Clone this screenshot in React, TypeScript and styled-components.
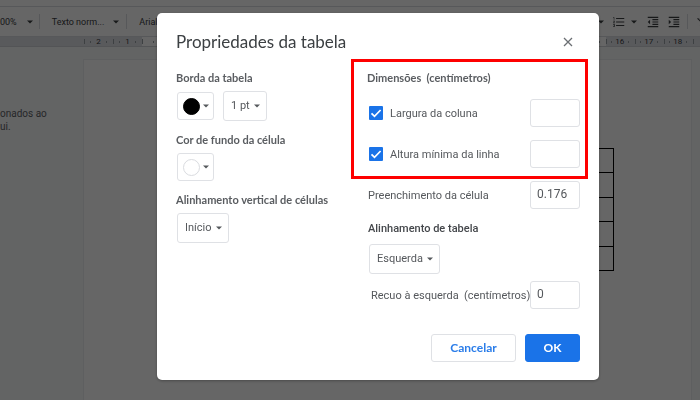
import React from "react";
import styled, { createGlobalStyle } from "styled-components";
import {
  MdFormatClear,
  MdFormatIndentDecrease,
  MdFormatIndentIncrease,
  MdFormatListNumbered,
} from "react-icons/md";

const GlobalStyle = createGlobalStyle`
  * { box-sizing: border-box; }
  html, body, #root { height: 100%; margin: 0; }
  body {
    overflow: hidden;
    font-family: Roboto, "Liberation Sans", sans-serif;
    font-size: 11px;
    color: #55585c;
  }
  button, input, select { font: inherit; color: inherit; margin: 0; }
`;

const rounded = `"Lato", "Open Sans", sans-serif`;

/* Document editor */

const Editor = styled.div`
  display: flex;
  flex-direction: column;
  height: 100%;
  background: #f8f9fa;
`;

const MenuStrip = styled.div`
  flex: none;
  height: 7px;
  background: #fff;
  border-bottom: 1px solid #dadce0;
`;

const Toolbar = styled.div`
  flex: none;
  display: flex;
  justify-content: space-between;
  height: 29px;
  background: #fff;
  font-size: 9px;
  color: #3c4043;
  overflow: hidden;
`;

const ToolGroup = styled.div`
  display: flex;
  align-items: center;
  flex: none;
`;

const Tool = styled.button<{ $gap?: number; $pad?: number }>`
  display: flex;
  flex: none;
  align-items: center;
  gap: ${(p) => p.$gap ?? 8}px;
  padding: 0 ${(p) => p.$pad ?? 6}px 0 0;
  border: 0;
  background: none;
  white-space: nowrap;
`;

const ClippedTool = styled(Tool)`
  width: 4px;
  padding: 0;
  overflow: hidden;
  > svg { flex: none; }
`;

const Divider = styled.span<{ $after?: number }>`
  width: 1px;
  height: 15px;
  margin-right: ${(p) => p.$after ?? 12}px;
  background: #dadce0;
`;

const Ruler = styled.div`
  flex: none;
  display: flex;
  height: 11px;
  padding-left: 84px;
  background: #dfe2e6;
  border-top: 1px solid #dadce0;
  border-bottom: 1px solid #d0d3d6;
  overflow: hidden;
`;

const RulerUnit = styled.div<{ $active: boolean }>`
  flex: none;
  display: flex;
  align-items: center;
  justify-content: space-between;
  width: 29px;
  padding-right: 6px;
  background: ${(p) => (p.$active ? "#fff" : "transparent")};
  font-size: 8px;
  line-height: 9px;
  color: #3c4043;
`;

const Tick = styled.i<{ $tall?: boolean }>`
  width: 1px;
  height: ${(p) => (p.$tall ? 5 : 2)}px;
  background: #9aa0a6;
`;

const Workspace = styled.div`
  flex: 1;
  display: flex;
  min-height: 0;
  padding: 12px 8px 0 0;
`;

const Outline = styled.aside`
  flex: none;
  width: 83px;
  padding-top: 48px;
  font-size: 10px;
  line-height: 13px;
  color: #5f6368;
`;

const Sheet = styled.main`
  flex: 1;
  padding: 88px 77px 0 88px;
  background: #fff;
  border: 1px solid #eceef0;
  border-bottom: 0;
`;

const DocTable = styled.table`
  width: 100%;
  height: 123px;
  border-collapse: collapse;
  td { padding: 0; border: 1px solid #000; }
`;

/* Dialog */

const Backdrop = styled.div`
  position: fixed;
  inset: 0;
  display: flex;
  align-items: flex-start;
  justify-content: center;
  padding: 13px 0 0 56px;
  background: rgba(0, 0, 0, 0.6);
`;

const Dialog = styled.section`
  width: 442px;
  max-width: 100%;
  padding: 0 11px 18px 19px;
  background: #fff;
  border-radius: 5px;
  box-shadow: 0 1px 3px rgba(0, 0, 0, 0.3);
`;

const DialogHeader = styled.header`
  display: flex;
  align-items: center;
  justify-content: space-between;
  height: 46px;
  padding: 11px 12px 0 0;
`;

const Title = styled.h1`
  margin: 0;
  font: 400 17px/24px ${rounded};
  color: #3c4043;
`;

const CloseButton = styled.button`
  display: flex;
  padding: 3px;
  border: 0;
  background: none;
  color: #6b6f73;
`;

const Columns = styled.div`
  display: grid;
  grid-template-columns: 175px minmax(0, 1fr);
`;

const LeftColumn = styled.div`
  display: flex;
  flex-direction: column;
  gap: 11px;
  padding-top: 11px;
`;

const Group = styled.div`
  display: flex;
  flex-direction: column;
  gap: 5px;
`;

const heading = `
  margin: 0;
  padding: 0;
  font: 700 11px/16px ${rounded};
  color: #5a5d61;
  white-space: pre;
`;

const Label = styled.label`${heading}`;
const Heading = styled.h2`${heading}`;
const StrongLabel = styled.label`
  ${heading}
  font-family: Roboto, sans-serif;
  font-weight: 500;
  color: #44474b;
`;

const Controls = styled.div`
  display: flex;
  align-items: center;
  gap: 9px;
  padding-left: 1px;
`;

const ColorButton = styled.button`
  display: flex;
  align-items: center;
  justify-content: space-between;
  width: 37px;
  height: 28px;
  padding: 0 4px 0 5px;
  background: #fff;
  border: 1px solid #dfe1e5;
  border-radius: 3px;
`;

const Swatch = styled.span<{ $color: string; $edge: string }>`
  width: 17px;
  height: 17px;
  border-radius: 50%;
  background: ${(p) => p.$color};
  border: 1px solid ${(p) => p.$edge};
`;

const SelectBox = styled.div<{ $width: number }>`
  display: grid;
  align-items: center;
  width: ${(p) => p.$width}px;
  height: 30px;
  > * { grid-area: 1 / 1; }
  > svg { justify-self: end; margin-right: 7px; pointer-events: none; }
`;

const NativeSelect = styled.select`
  appearance: none;
  width: 100%;
  height: 100%;
  padding: 0 0 2px 7px;
  background: #fff;
  border: 1px solid #dfe1e5;
  border-radius: 3px;
`;

const Highlight = styled.div`
  display: flex;
  flex-direction: column;
  gap: 13px;
  padding: 8px 5px 8px 13px;
  border: 3px solid #fe0000;
`;

const Field = styled.div<{ $indent?: number }>`
  display: flex;
  align-items: center;
  padding-left: ${(p) => p.$indent ?? 0}px;
  white-space: pre;
  > label { flex: 1; min-width: 0; }
`;

const CheckField = styled(Field)`
  gap: 7px;
  padding-left: 2px;
`;

const Checkbox = styled.input`
  appearance: none;
  width: 14px;
  height: 14px;
  border-radius: 1px;
  background: #1a73e8;
`;

const CheckMark = styled.span`
  display: grid;
  > * { grid-area: 1 / 1; }
  > svg { pointer-events: none; }
`;

const TextInput = styled.input`
  flex: none;
  width: 50px;
  height: 28px;
  padding: 0 6px 2px;
  font-size: 12px;
  background: #fff;
  border: 1px solid #dfe1e5;
  border-radius: 3px;
`;

const LowerFields = styled.div`
  display: flex;
  flex-direction: column;
  gap: 7px;
  padding: 2px 8px 0 17px;
`;

const AlignmentGroup = styled.div`
  display: flex;
  flex-direction: column;
  gap: 7px;
  padding-top: 5px;
`;

const Footer = styled.footer`
  display: flex;
  justify-content: flex-end;
  gap: 9px;
  padding: 25px 8px 0 0;
`;

const Action = styled.button<{ $primary?: boolean }>`
  width: ${(p) => (p.$primary ? 55 : 85)}px;
  height: 28px;
  padding: 0 0 1px;
  font: 700 12px/16px ${rounded};
  color: ${(p) => (p.$primary ? "#fff" : "#2b7de9")};
  background: ${(p) => (p.$primary ? "#1a73e8" : "#fff")};
  border: 1px solid ${(p) => (p.$primary ? "#1a73e8" : "#dfe1e5")};
  border-radius: 3px;
`;

const Caret = () => (
  <svg width="6" height="4" viewBox="0 0 6 4" aria-hidden="true">
    <path d="M0 0.5h6L3 3.5z" fill="currentColor" />
  </svg>
);

function Select({ id, value, width }: { id: string; value: string; width: number }) {
  return (
    <SelectBox $width={width}>
      <NativeSelect id={id} defaultValue={value}>
        <option>{value}</option>
      </NativeSelect>
      <Caret />
    </SelectBox>
  );
}

function CheckRow({ id, text }: { id: string; text: string }) {
  return (
    <CheckField>
      <CheckMark>
        <Checkbox type="checkbox" id={id} defaultChecked />
        <svg width="14" height="14" viewBox="0 0 14 14" aria-hidden="true">
          <path d="M2.5 7.3L5.5 10.3L11.6 4" fill="none" stroke="#fff" strokeWidth="1.7" />
        </svg>
      </CheckMark>
      <label htmlFor={id}>{text}</label>
      <TextInput type="text" aria-label={text} />
    </CheckField>
  );
}

/* Numerals are shown only in the two margins; the body of the ruler has ticks. */
const units = ["2", "1", ...Array<string>(16).fill(""), "16", "17", "18"];

export default function App() {
  return (
    <>
      <GlobalStyle />
      <Editor>
        <MenuStrip />
        <Toolbar>
          <ToolGroup>
            <Tool $gap={10}>00% <Caret /></Tool>
            <Divider />
            <Tool $gap={9} $pad={7}>Texto norm... <Caret /></Tool>
            <Divider />
            <Tool>Arial</Tool>
          </ToolGroup>
          <ToolGroup>
            <Tool $pad={8} aria-label="Marcadores"><Caret /></Tool>
            <Tool $gap={5} $pad={9} aria-label="Lista numerada"><MdFormatListNumbered size={14} /><Caret /></Tool>
            <Tool $pad={7} aria-label="Diminuir recuo"><MdFormatIndentDecrease size={14} /></Tool>
            <Tool aria-label="Aumentar recuo"><MdFormatIndentIncrease size={14} /></Tool>
            <Divider $after={8} />
            <ClippedTool aria-label="Limpar formatação"><MdFormatClear size={14} /></ClippedTool>
          </ToolGroup>
        </Toolbar>
        <Ruler>
          {units.map((n, i) => (
            <RulerUnit key={i} $active={i > 1 && i < 18}>
              <Tick $tall /><Tick />{n}<Tick />
            </RulerUnit>
          ))}
          <RulerUnit $active={false}><Tick $tall /></RulerUnit>
        </Ruler>
        <Workspace>
          <Outline>onados ao<br />ui.</Outline>
          <Sheet>
            <DocTable>
              <tbody>
                {[1, 2, 3, 4, 5].map((r) => (
                  <tr key={r}><td /><td /><td /></tr>
                ))}
              </tbody>
            </DocTable>
          </Sheet>
        </Workspace>
      </Editor>

      <Backdrop>
        <Dialog role="dialog" aria-labelledby="title">
          <DialogHeader>
            <Title id="title">Propriedades da tabela</Title>
            <CloseButton aria-label="Fechar">
              <svg width="10" height="10" viewBox="0 0 10 10" aria-hidden="true">
                <path d="M1 1l8 8M9 1l-8 8" stroke="currentColor" strokeWidth="1.3" />
              </svg>
            </CloseButton>
          </DialogHeader>
          <Columns>
            <LeftColumn>
              <Group>
                <Label htmlFor="border-width">Borda da tabela</Label>
                <Controls>
                  <ColorButton aria-label="Cor da borda"><Swatch $color="#000" $edge="#000" /><Caret /></ColorButton>
                  <Select id="border-width" value="1 pt" width={44} />
                </Controls>
              </Group>
              <Group>
                <Label htmlFor="cell-color">Cor de fundo da célula</Label>
                <Controls>
                  <ColorButton id="cell-color"><Swatch $color="#fff" $edge="#dadce0" /><Caret /></ColorButton>
                </Controls>
              </Group>
              <Group>
                <Label htmlFor="v-align">Alinhamento vertical de células</Label>
                <Controls><Select id="v-align" value="Início" width={52} /></Controls>
              </Group>
            </LeftColumn>
            <div>
              <Highlight>
                <Heading>Dimensões  (centímetros)</Heading>
                <CheckRow id="col-width" text="Largura da coluna" />
                <CheckRow id="row-height" text="Altura mínima da linha" />
              </Highlight>
              <LowerFields>
                <Field>
                  <label htmlFor="cell-padding">Preenchimento da célula</label>
                  <TextInput type="text" id="cell-padding" defaultValue="0.176" />
                </Field>
                <AlignmentGroup>
                  <StrongLabel htmlFor="table-align">Alinhamento de tabela</StrongLabel>
                  <Controls><Select id="table-align" value="Esquerda" width={71} /></Controls>
                </AlignmentGroup>
                <Field $indent={3}>
                  <label htmlFor="left-indent">Recuo à esquerda  (centímetros)</label>
                  <TextInput type="text" id="left-indent" defaultValue="0" />
                </Field>
              </LowerFields>
            </div>
          </Columns>
          <Footer>
            <Action>Cancelar</Action>
            <Action $primary>OK</Action>
          </Footer>
        </Dialog>
      </Backdrop>
    </>
  );
}
